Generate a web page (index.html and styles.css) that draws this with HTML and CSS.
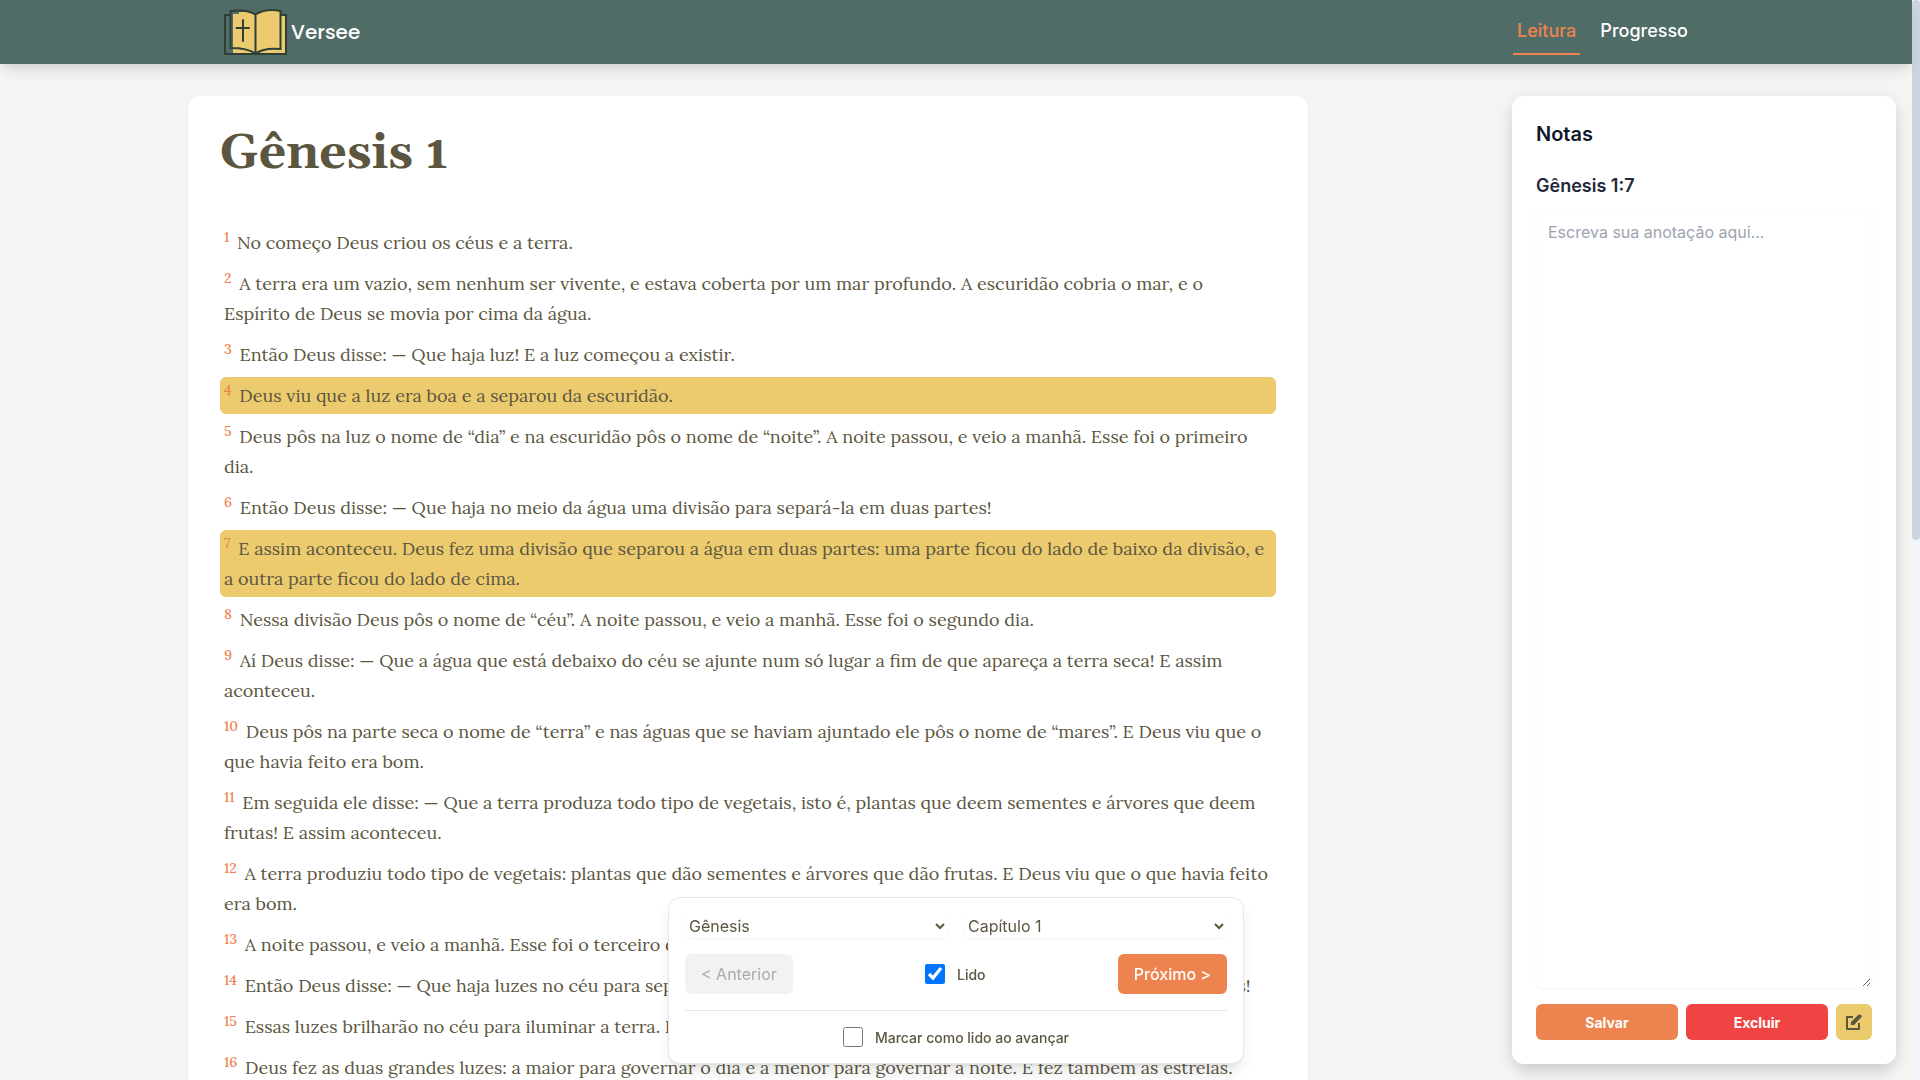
FILE: index.html
```html
<!DOCTYPE html>
<html lang="pt-BR">
<head>
  <meta charset="UTF-8">
  <title>Versee</title>
  <meta name="viewport" content="width=device-width, initial-scale=1.0">
  <link rel="stylesheet" href="styles.css">
</head>
<body>
  <div class="app">
    <header class="header">
      <div class="header-content">
        <a href="#" class="brand">
          <svg class="logo" viewBox="0 0 64 48" aria-hidden="true">
            <path d="M9 6H15V4H20V3C24 3 29 4.500 32 6.500C38 2.500 48 1 57 2.500V7H62V46H9Z" fill="#ebcb6e"/>
            <path d="M6.500 7H1V46H62V7H57" fill="none" stroke="#2f3e36" stroke-width="2"/>
            <path d="M31.500 6.500C25 2.500 16 2 6.500 3V40C16 40 25 41 31.500 45.500C38 41 47 40 56.500 41V3C47 1 38 2.500 31.500 6.500V45" fill="none" stroke="#2f3e36" stroke-width="2"/>
            <path d="M19 12V33M12.500 20H25" fill="none" stroke="#2f3e36" stroke-width="2" stroke-linecap="round"/>
          </svg>
          <span>Versee</span>
        </a>
        <nav class="nav">
          <a href="#" class="active">Leitura</a>
          <a href="#">Progresso</a>
        </nav>
      </div>
    </header>

    <main class="page">
      <article class="chapter">
        <h1>Gênesis 1</h1>
        <div class="verses">
          <p><sup>1</sup> No começo Deus criou os céus e a terra.</p>
          <p><sup>2</sup> A terra era um vazio, sem nenhum ser vivente, e estava coberta por um mar profundo. A escuridão cobria o mar, e o Espírito de Deus se movia por cima da água.</p>
          <p><sup>3</sup> Então Deus disse: — Que haja luz! E a luz começou a existir.</p>
          <p class="marked"><sup>4</sup> Deus viu que a luz era boa e a separou da escuridão.</p>
          <p><sup>5</sup> Deus pôs na luz o nome de “dia” e na escuridão pôs o nome de “noite”. A noite passou, e veio a manhã. Esse foi o primeiro dia.</p>
          <p><sup>6</sup> Então Deus disse: — Que haja no meio da água uma divisão para separá-la em duas partes!</p>
          <p class="marked"><sup>7</sup> E assim aconteceu. Deus fez uma divisão que separou a água em duas partes: uma parte ficou do lado de baixo da divisão, e a outra parte ficou do lado de cima.</p>
          <p><sup>8</sup> Nessa divisão Deus pôs o nome de “céu”. A noite passou, e veio a manhã. Esse foi o segundo dia.</p>
          <p><sup>9</sup> Aí Deus disse: — Que a água que está debaixo do céu se ajunte num só lugar a fim de que apareça a terra seca! E assim aconteceu.</p>
          <p><sup>10</sup> Deus pôs na parte seca o nome de “terra” e nas águas que se haviam ajuntado ele pôs o nome de “mares”. E Deus viu que o que havia feito era bom.</p>
          <p><sup>11</sup> Em seguida ele disse: — Que a terra produza todo tipo de vegetais, isto é, plantas que deem sementes e árvores que deem frutas! E assim aconteceu.</p>
          <p><sup>12</sup> A terra produziu todo tipo de vegetais: plantas que dão sementes e árvores que dão frutas. E Deus viu que o que havia feito era bom.</p>
          <p><sup>13</sup> A noite passou, e veio a manhã. Esse foi o terceiro dia.</p>
          <p><sup>14</sup> Então Deus disse: — Que haja luzes no céu para separarem o dia da noite e para marcarem os dias, os anos e as estações!</p>
          <p><sup>15</sup> Essas luzes brilharão no céu para iluminar a terra. E assim aconteceu.</p>
          <p><sup>16</sup> Deus fez as duas grandes luzes: a maior para governar o dia e a menor para governar a noite. E fez também as estrelas.</p>
        </div>
      </article>

      <aside class="notes">
        <h2>Notas</h2>
        <label for="note">Gênesis 1:7</label>
        <textarea id="note" placeholder="Escreva sua anotação aqui..."></textarea>
        <div class="notes-actions">
          <button type="button" class="save">Salvar</button>
          <button type="button" class="delete">Excluir</button>
          <button type="button" class="edit" aria-label="Editar">
            <svg viewBox="0 0 16 16" aria-hidden="true">
              <path d="M7 3H1V15H13V9" fill="none" stroke="#5c5641" stroke-width="2" stroke-linejoin="round"/>
              <path d="M5 11V8L12.500 .800Q14 0 15.200 1.200Q16 2.500 15.200 3.500L8 11Z" fill="#5c5641"/>
            </svg>
          </button>
        </div>
      </aside>
    </main>

    <form class="controls">
      <div class="selects">
        <select aria-label="Livro"><option>Gênesis</option></select>
        <select aria-label="Capítulo"><option>Capítulo 1</option></select>
      </div>
      <div class="steps">
        <button type="button" class="prev" disabled>&lt; Anterior</button>
        <label class="check"><input type="checkbox" checked> Lido</label>
        <button type="button" class="next">Próximo &gt;</button>
      </div>
      <div class="auto-read">
        <label class="check"><input type="checkbox"> Marcar como lido ao avançar</label>
      </div>
    </form>
  </div>
  <div class="scrollbar"><div class="thumb"></div></div>
</body>
</html>
```
FILE: styles.css
```css
* {
  box-sizing: border-box;
}

body {
  margin: 0;
  height: 100vh;
  display: flex;
  overflow: hidden;
  background-color: #f5f5f3;
  color: #5c5641;
  font-family: Inter, "Liberation Sans", sans-serif;
  font-size: 16px;
}

h1, h2, p {
  margin: 0;
}

button, select, textarea {
  font-family: inherit;
}

.app {
  flex: 1;
  min-width: 0;
}

.scrollbar {
  width: 8px;
  background-color: #f1f5f9;
}

.thumb {
  height: 50%;
  border-radius: 4px;
  background-color: #cbd5e1;
}

/* Header */
.header {
  position: relative;
  background-color: #506c66;
  box-shadow: 0 10px 15px -3px rgba(0, 0, 0, 0.1), 0 4px 6px -4px rgba(0, 0, 0, 0.1);
}

.header-content {
  max-width: 1536px;
  height: 64px;
  margin: 0 auto;
  padding: 0 32px;
  display: flex;
  align-items: center;
  justify-content: space-between;
}

.brand {
  display: flex;
  align-items: center;
  gap: 3px;
  padding-left: 4px;
  color: #fff;
  font-family: Poppins, Inter, sans-serif;
  font-size: 20px;
  line-height: 28px;
  font-weight: 500;
  text-decoration: none;
}

.logo {
  width: 64px;
  height: 48px;
}

.nav {
  display: flex;
  gap: 16px;
}

.nav a {
  padding: 8px 4px;
  border-bottom: 2px solid transparent;
  color: #fff;
  font-size: 18px;
  line-height: 28px;
  font-weight: 500;
  text-decoration: none;
}

.nav .active {
  color: #ed844f;
  border-color: #ed844f;
}

/* Reading area */
.page {
  display: flex;
  justify-content: space-between;
  align-items: flex-start;
  gap: 32px;
  padding: 32px 16px 16px max(32px, calc((100% - 1536px) / 2));
}

.chapter {
  flex: 0 1 1120px;
  padding: 32px;
  border-radius: 12px;
  background-color: #fff;
  box-shadow: 0 1px 3px rgba(0, 0, 0, 0.1);
  font-family: Lora, "Liberation Serif", serif;
}

h1 {
  margin-bottom: 44px;
  font-family: Georgia, Gelasio, Lora, serif;
  font-size: 48px;
  line-height: 52px;
}

.verses {
  display: flex;
  flex-direction: column;
  gap: 4px;
  font-size: 18px;
  line-height: 30px;
}

.verses p {
  padding: 4px 4px 3px;
  border-radius: 6px;
}

.verses .marked {
  background-color: #ebcb6e;
}

sup {
  margin-right: 3px;
  color: #ed844f;
  font-size: 14px;
  line-height: 0;
  font-weight: 500;
}

/* Notes */
.notes {
  flex: 0 0 384px;
  height: calc(100vh - 112px);
  padding: 24px;
  display: flex;
  flex-direction: column;
  border-radius: 12px;
  background-color: #fff;
  box-shadow: 0 10px 15px -3px rgba(0, 0, 0, 0.1), 0 4px 20px rgba(0, 0, 0, 0.1);
}

.notes h2 {
  margin-bottom: 24px;
  color: #0f172a;
  font-size: 20px;
  line-height: 28px;
  font-weight: 600;
}

.notes label {
  margin-bottom: 8px;
  color: #1e293b;
  font-size: 18px;
  line-height: 28px;
  font-weight: 600;
}

.notes textarea {
  flex: 1;
  padding: 11px;
  border: 1px solid #fdfdfd;
  border-radius: 6px;
  font-size: 16px;
  line-height: 24px;
  box-shadow: 0 1px 2px rgba(0, 0, 0, 0.05);
}

.notes textarea::placeholder {
  color: #9ca3af;
}

.notes-actions {
  display: flex;
  gap: 8px;
  margin-top: 16px;
}

.notes-actions button {
  flex: 1;
  height: 36px;
  padding: 0;
  border: 0;
  border-radius: 6px;
  color: #fff;
  font-size: 14px;
  font-weight: 700;
}

.notes-actions .save {
  background-color: #ed844f;
}

.notes-actions .delete {
  background-color: #f04444;
}

.notes-actions .edit {
  flex: 0 0 36px;
  display: flex;
  align-items: center;
  justify-content: center;
  background-color: #ebcb6e;
}

.edit svg {
  width: 16px;
  height: 16px;
}

/* Floating chapter controls */
.controls {
  position: fixed;
  bottom: 16px;
  left: calc(50% - 4px);
  transform: translateX(-50%);
  width: 576px;
  padding: 16px;
  border: 1px solid #e5e7eb;
  border-radius: 12px;
  background-color: #fff;
  box-shadow: 0 10px 15px -3px rgba(0, 0, 0, 0.1), 0 4px 6px -4px rgba(0, 0, 0, 0.1);
}

.selects {
  display: flex;
  gap: 16px;
}

.selects select {
  flex: 1;
  height: 24px;
  border: 0;
  border-radius: 6px;
  background-color: #fff;
  color: inherit;
  font-size: 16px;
  box-shadow: 0 1px 2px rgba(0, 0, 0, 0.05);
}

.steps {
  display: flex;
  align-items: center;
  justify-content: space-between;
  margin: 16px 0;
}

.steps button {
  height: 40px;
  padding: 0 16px;
  border: 0;
  border-radius: 6px;
  font-size: 16px;
}

.prev {
  background-color: #f1f2f4;
  color: #aeaba0;
}

.next {
  background-color: #ed844f;
  color: #fff;
  font-weight: 500;
}

.check {
  display: flex;
  align-items: center;
  gap: 12px;
  font-size: 14px;
  font-weight: 500;
}

.check input {
  width: 20px;
  height: 20px;
  margin: 0;
}

.auto-read {
  display: flex;
  justify-content: center;
  padding-top: 16px;
  border-top: 1px solid #e5e7eb;
}
```
